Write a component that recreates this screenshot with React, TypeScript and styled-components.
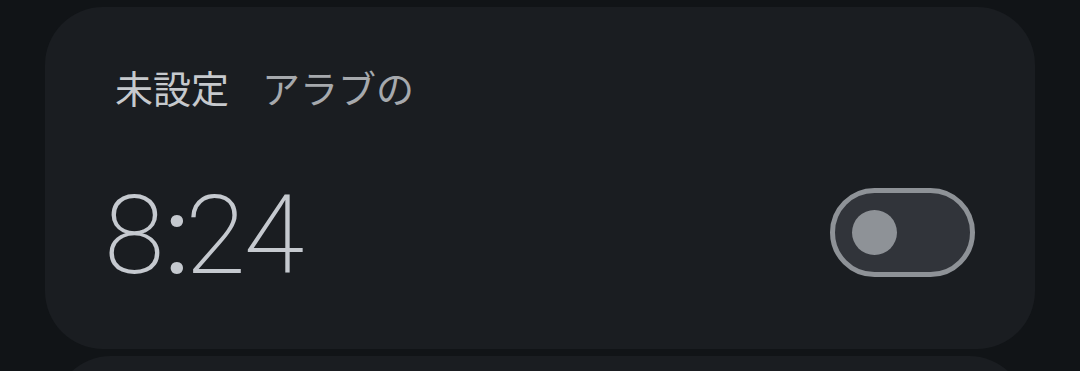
import React from "react";
import styled, { createGlobalStyle } from "styled-components";

const Global = createGlobalStyle`
  html, body { margin: 0; padding: 0; background: #111417; }
  body { width: 1080px; height: 371px; overflow: hidden; }
`;

const Page = styled.div`
  display: flex;
  flex-direction: column;
  gap: 7px;
  padding: 7px 45px 0 45px;
  box-sizing: border-box;
  width: 1080px;
  height: 371px;
  overflow: hidden;
`;

const Card = styled.div<{ $offset?: number }>`
  flex: none;
  height: 342px;
  box-sizing: border-box;
  border-radius: 58px;
  background: #1a1d21;
  padding: 54px 60px 0 70px;
  margin: 0 ${(p) => p.$offset ?? 0}px;
  display: flex;
  flex-direction: column;
`;

const Label = styled.div`
  font-family: "Noto Sans CJK JP", "Noto Sans", sans-serif;
  font-size: 38px;
  line-height: 52px;
  height: 52px;
  display: flex;
  gap: 33px;
`;

const LabelPart = styled.span<{ $dim?: boolean }>`
  color: ${(p) => (p.$dim ? "#a6a9ad" : "#c6c9cd")};
`;

const Row = styled.div`
  margin-top: 69px;
  height: 100px;
  display: flex;
  align-items: center;
  justify-content: space-between;
`;

const Time = styled.div`
  font-family: Roboto, "Noto Sans", sans-serif;
  font-weight: 200;
  font-size: 110px;
  line-height: 100px;
  color: #c5c9cf;
  margin-left: -11px;
  margin-top: 8px;
  letter-spacing: -2px;
`;

const Colon = styled.span`
  font-weight: 400;
  letter-spacing: -5px;
  margin-left: 1px;
`;

const Toggle = styled.div`
  width: 145px;
  height: 89px;
  box-sizing: border-box;
  border: 5px solid #8e9297;
  border-radius: 45px;
  background: #31343a;
  display: flex;
  align-items: center;
  padding-left: 17px;
`;

const Knob = styled.div`
  width: 45px;
  height: 45px;
  border-radius: 50%;
  background: #8e9297;
`;

export default function App() {
  return (
    <>
      <Global />
      <Page>
        <Card>
          <Label>
            <LabelPart>未設定</LabelPart>
            <LabelPart $dim>アラブの</LabelPart>
          </Label>
          <Row>
            <Time>
              8<Colon>:</Colon>24
            </Time>
            <Toggle>
              <Knob />
            </Toggle>
          </Row>
        </Card>
        <Card $offset={8} />
      </Page>
    </>
  );
}
